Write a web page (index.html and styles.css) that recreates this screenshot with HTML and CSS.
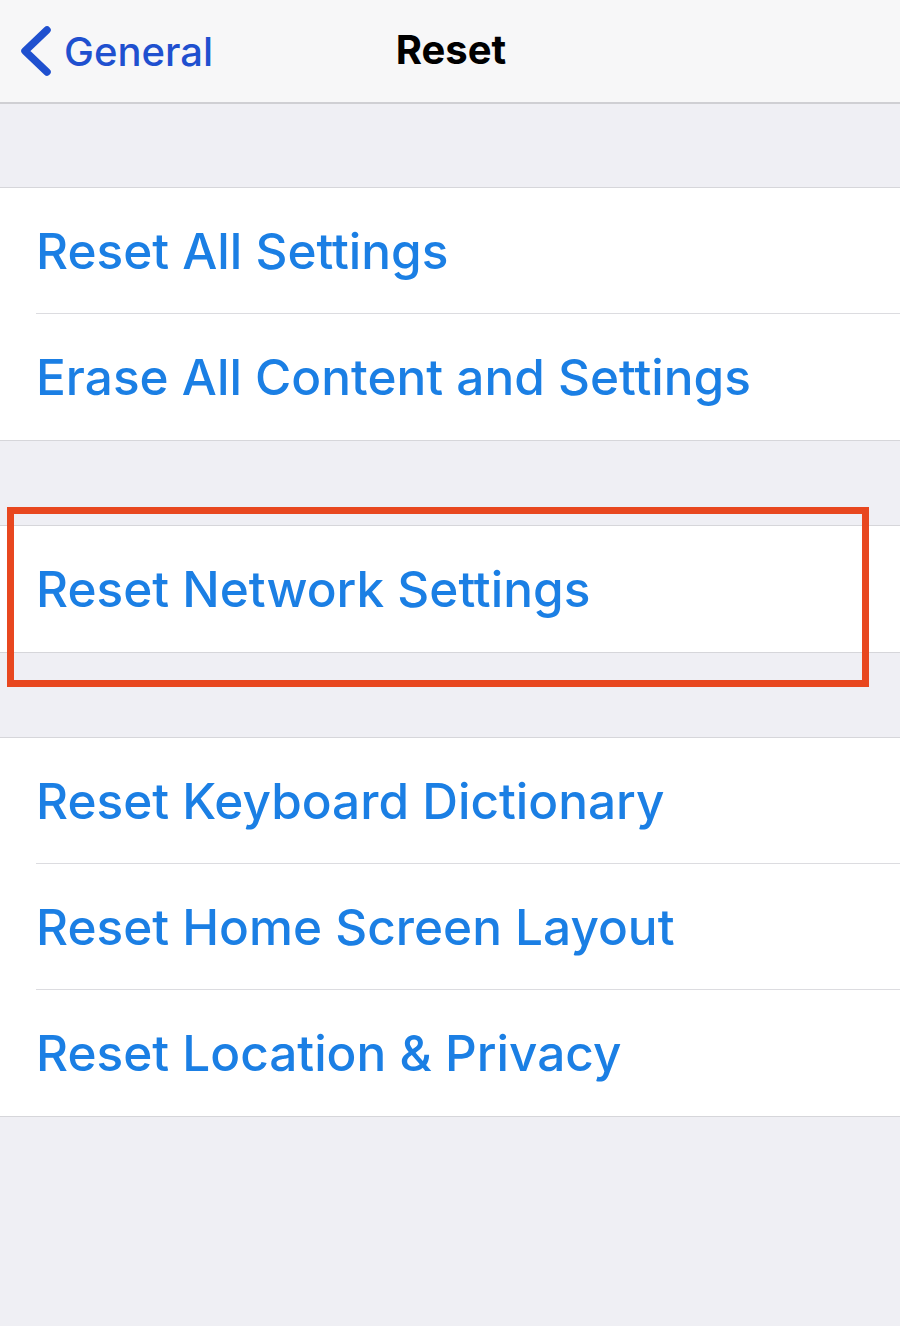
FILE: index.html
```html
<!DOCTYPE html>
<html>
<head>
	<title>Reset</title>
	<link rel="stylesheet" href="styles.css">
</head>
<body>
	<div class="navbar">
		<a class="back" href="#">
			<svg class="chevron" width="36" height="52" viewBox="0 0 36 52">
				<path d="M29 5 L7 26 L29 47" fill="none" stroke="#1f50cf" stroke-width="7.5" stroke-linecap="round" stroke-linejoin="round"/>
			</svg>
			<span>General</span>
		</a>
		<div class="title">Reset</div>
	</div>

	<div class="group">
		<div class="row">Reset All Settings</div>
		<div class="row">Erase All Content and Settings</div>
	</div>

	<div class="group">
		<div class="row">Reset Network Settings</div>
	</div>

	<div class="group">
		<div class="row">Reset Keyboard Dictionary</div>
		<div class="row">Reset Home Screen Layout</div>
		<div class="row">Reset Location &amp; Privacy</div>
	</div>

	<div class="highlight"></div>
</body>
</html>
```

FILE: styles.css
```css
body {
	margin: 0;
	background-color: #efeff4;
	font-family: "Inter", "Liberation Sans", sans-serif;
	height: 1326px;
	position: relative;
	overflow: hidden;
}

.navbar {
	height: 102px;
	background-color: #f7f7f8;
	border-bottom: 2px solid #cfcfd3;
	display: flex;
	align-items: center;
	justify-content: center;
	position: relative;
}

.back {
	position: absolute;
	left: 18px;
	top: 25px;
	display: flex;
	align-items: center;
	gap: 10px;
	color: #1f50cf;
	text-decoration: none;
	font-size: 40px;
	font-weight: 500;
}

.title {
	font-size: 40px;
	font-weight: 700;
	color: #000;
	margin-left: 2px;
	margin-top: -4px;
}

.group {
	margin-top: 83px;
	background-color: #fff;
	border-top: 1px solid #d6d6da;
	border-bottom: 1px solid #d6d6da;
	padding-left: 36px;
}

.group + .group {
	margin-top: 84px;
}

.row {
	height: 125px;
	display: flex;
	align-items: center;
	color: #1b7fe4;
	font-size: 49.5px;
	font-weight: 550;
	border-bottom: 1px solid #dcdce0;
}

.row:last-child {
	border-bottom: none;
	height: 126px;
}

.highlight {
	position: absolute;
	left: 7px;
	top: 507px;
	width: 848px;
	height: 166px;
	border: 7px solid #e8471f;
}
```
